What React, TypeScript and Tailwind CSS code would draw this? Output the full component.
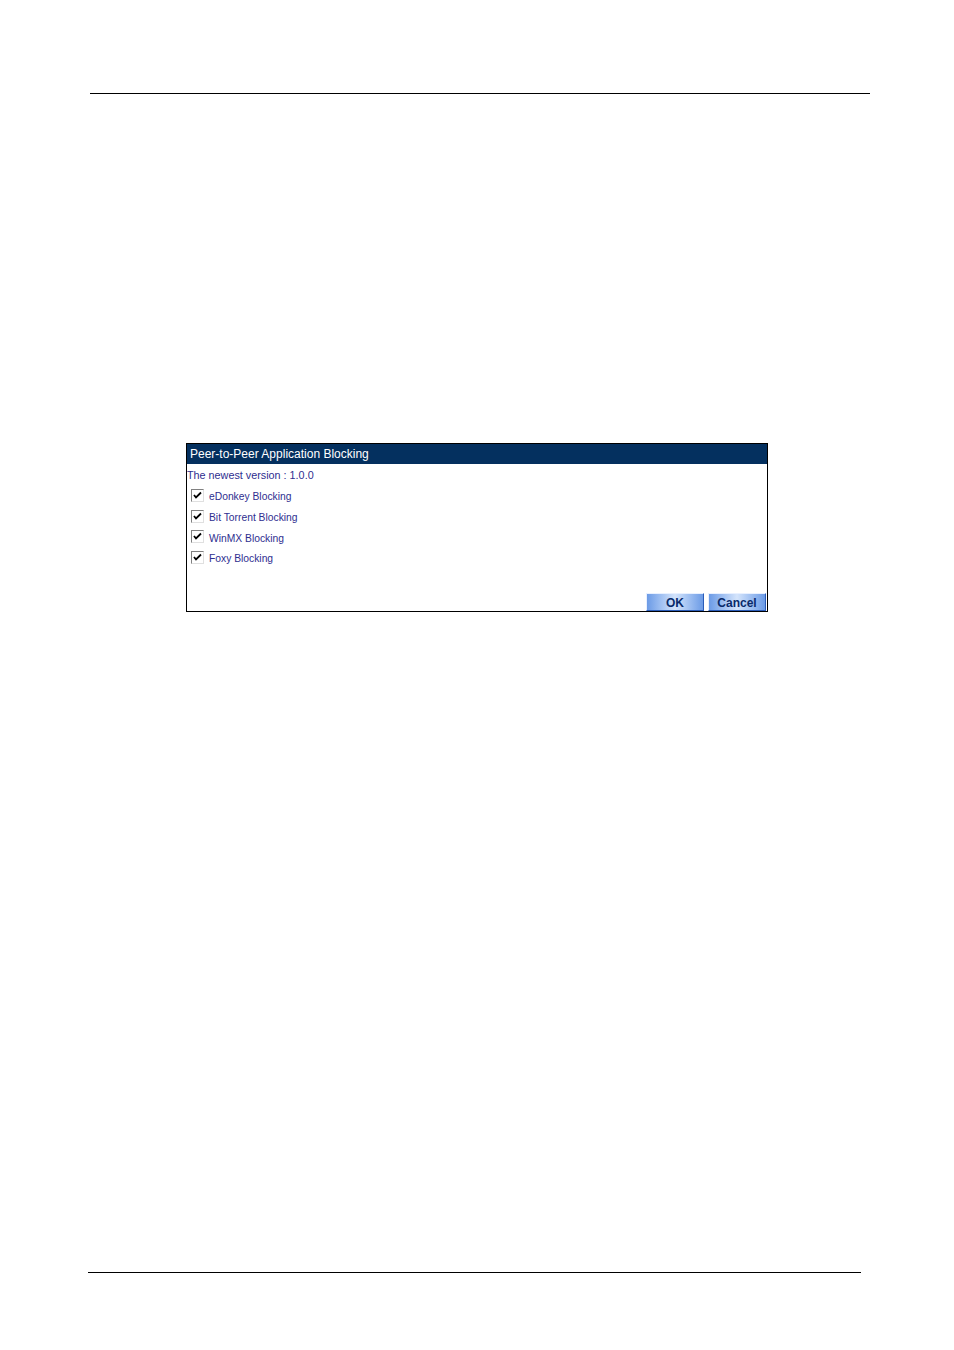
import { FC } from 'react';

const items = ['eDonkey Blocking', 'Bit Torrent Blocking', 'WinMX Blocking', 'Foxy Blocking'];

const CheckBox: FC = () => (
  <div className="w-[13px] h-[13px] bg-white border border-t-[#808080] border-l-[#808080] border-b-[#e0e0e0] border-r-[#e0e0e0] flex items-center justify-center shrink-0">
    <svg width="9" height="9" viewBox="0 0 9 9">
      <path d="M1 4 L3 6.5 L8 1.5" stroke="#000" strokeWidth="1.8" fill="none" />
    </svg>
  </div>
);

const Button: FC<{ label: string; w: string }> = ({ label, w }) => (
  <button
    className={`${w} h-[18px] border border-t-[#e8f0ff] border-l-[#e8f0ff] border-b-[#2a5cb8] border-r-[#2a5cb8] bg-gradient-to-r from-[#6c9be6] via-[#d4e4fb] to-[#6c9be6] text-[#0a2a6a] font-bold text-[12px] leading-none flex items-center justify-center pt-[1px]`}
    style={{ fontFamily: '"Liberation Sans Narrow", "Liberation Sans", Arial, sans-serif' }}
  >
    {label}
  </button>
);

export default function App() {
  return (
    <div className="w-[954px] h-[1350px] bg-white pt-[93px]" style={{ fontFamily: '"Liberation Sans", Arial, sans-serif' }}>
      <div className="ml-[90px] w-[780px] h-px bg-black" />

      {/* Dialog */}
      <div className="mt-[349px] ml-[186px] w-[582px] h-[169px] border border-black flex flex-col">
        <div className="h-[20px] bg-[#04305f] text-white text-[12px] px-[3px] flex items-center">
          Peer-to-Peer Application Blocking
        </div>
        <div className="text-[10.8px] text-[#2e2e8f] mt-[4px] leading-[14px]">The newest version : 1.0.0</div>
        <div className="flex flex-col mt-[7px] gap-[7.7px]">
          {items.map((label) => (
            <div key={label} className="flex items-center h-[13px] pl-[4px]">
              <CheckBox />
              <span className="ml-[5px] text-[10.3px] text-[#2e2e8f] mt-[3px]">{label}</span>
            </div>
          ))}
        </div>
        <div className="flex-1" />
        <div className="flex justify-end gap-[4px] pr-[1px]">
          <Button label="OK" w="w-[58px]" />
          <Button label="Cancel" w="w-[58px]" />
        </div>
      </div>

      <div className="mt-[660px] ml-[88px] w-[773px] h-px bg-black" />
    </div>
  );
}
